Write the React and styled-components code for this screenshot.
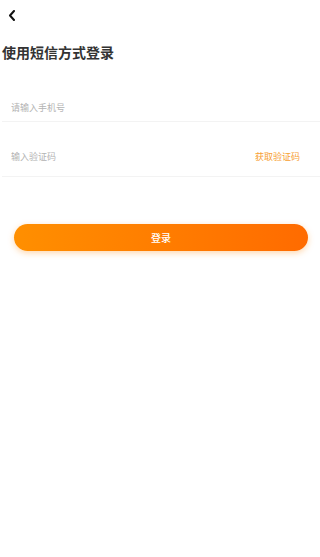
import React from "react";
import styled, { createGlobalStyle } from "styled-components";

const Global = createGlobalStyle`
  html, body { margin: 0; padding: 0; background: #fff; }
  body { font-family: "Noto Sans CJK SC", "Noto Sans", sans-serif; }
  * { box-sizing: border-box; }
`;

const Page = styled.div`
  width: 320px;
  min-height: 557px;
  background: #fff;
  display: flex;
  flex-direction: column;
`;

const Header = styled.div`
  height: 42px;
  padding: 9px 0 0 8px;
`;

const BackButton = styled.button`
  border: 0;
  background: none;
  padding: 0;
  width: 8px;
  height: 11px;
  display: block;
  cursor: pointer;
`;

const Title = styled.h1`
  margin: 0 0 0 2px;
  font-size: 14px;
  line-height: 20px;
  font-weight: 600;
  color: #333;
`;

const Form = styled.div`
  margin-left: 2px;
  display: flex;
  flex-direction: column;
`;

const Row = styled.div`
  display: flex;
  align-items: center;
  padding: ${(p) => p.$pad};
  border-bottom: 1.5px solid #f3f3f3;
`;

const Field = styled.input`
  flex: 1;
  min-width: 0;
  border: 0;
  outline: none;
  background: transparent;
  padding: 0 0 0 9px;
  height: 14px;
  font-family: inherit;
  font-size: 9px;
  line-height: 14px;
  color: #333;
  &::placeholder { color: #b3b3b3; }
`;

const CodeLink = styled.span`
  font-size: 9px;
  line-height: 14px;
  color: #f7a032;
  margin-right: 20px;
`;

const SubmitButton = styled.button`
  margin: 47px 12px 0 14px;
  height: 27px;
  border: 0;
  border-radius: 14px;
  background: linear-gradient(90deg, #ff8f00 0%, #ff6b00 100%);
  box-shadow: 0 2px 6px rgba(255, 140, 20, 0.35);
  color: #fff;
  font-family: inherit;
  font-size: 10px;
  font-weight: 500;
  cursor: pointer;
`;

export default function App() {
  return (
    <Page>
      <Global />
      <Header>
        <BackButton aria-label="返回">
          <svg width="8" height="11" viewBox="0 0 8 11">
            <path d="M6 1 L2 5.5 L6 10" fill="none" stroke="#111" strokeWidth="2" strokeLinecap="round" strokeLinejoin="round" />
          </svg>
        </BackButton>
      </Header>
      <Title>使用短信方式登录</Title>
      <Form>
        <Row $pad="39px 0 6px 0">
          <Field placeholder="请输入手机号" />
        </Row>
        <Row $pad="28px 0 12px 0">
          <Field placeholder="输入验证码" />
          <CodeLink>获取验证码</CodeLink>
        </Row>
      </Form>
      <SubmitButton>登录</SubmitButton>
    </Page>
  );
}
